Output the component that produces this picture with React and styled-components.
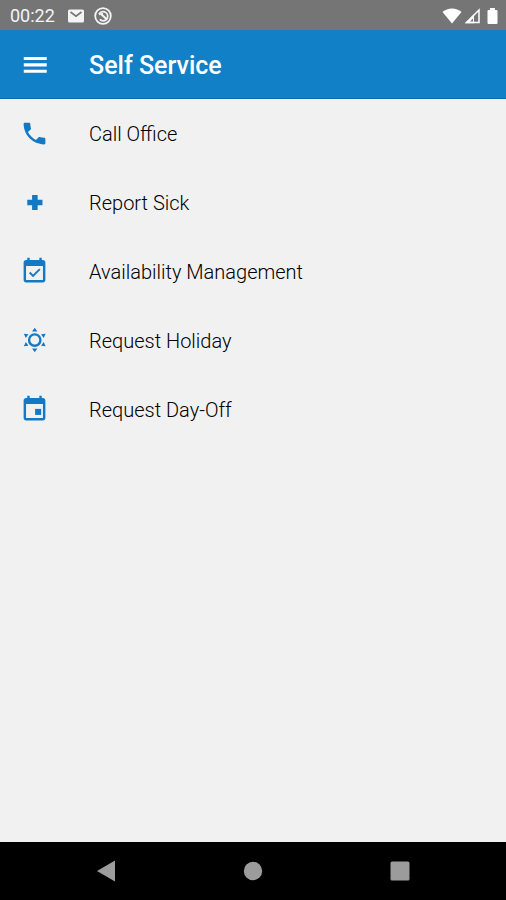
import React from "react";
import styled, { createGlobalStyle } from "styled-components";

const GlobalStyle = createGlobalStyle`
  *, *::before, *::after { box-sizing: border-box; }
  html, body { margin: 0; height: 100%; }
  body { background: #f1f1f1; font-family: Roboto, "Noto Sans", sans-serif; }
  #root { height: 100%; }
`;

const Screen = styled.div`
  display: flex;
  flex-direction: column;
  min-height: 100%;
  background: #f1f1f1;
`;

const StatusBar = styled.div`
  display: flex;
  align-items: center;
  justify-content: space-between;
  height: 30px;
  padding: 1px 5px 0 10px;
  background: #757575;
  color: #f4f4f4;
`;

const StatusGroup = styled.div`
  display: flex;
  align-items: center;
  gap: ${(p) => p.$gap}px;
`;

const Clock = styled.time`
  margin-right: 4px;
  font-size: 18px;
  line-height: 28px;
`;

const AppBar = styled.header`
  display: flex;
  align-items: center;
  height: 69px;
  padding-left: 16px;
  background: #1180c6;
  border-bottom: 1px solid #0d6cb0;
  color: #fff;
`;

const MenuButton = styled.button`
  display: flex;
  align-items: center;
  justify-content: center;
  width: 38px;
  height: 38px;
  margin-right: 35px;
  padding: 0;
  border: 0;
  background: none;
  color: #fff;
  cursor: pointer;
`;

const Title = styled.h1`
  margin: 0;
  padding-top: 4px;
  font-size: 25px;
  font-weight: 500;
  line-height: 32px;
`;

const Menu = styled.ul`
  flex: 1;
  margin: 0;
  padding: 0;
  list-style: none;
`;

const MenuItem = styled.a`
  display: flex;
  align-items: center;
  gap: 40px;
  height: 69px;
  padding-left: 20px;
  color: #000;
  font-size: 20px;
  font-weight: 300;
  line-height: 28px;
  text-decoration: none;

  svg { color: #1479c4; flex: none; }
`;

const NavBar = styled.nav`
  display: flex;
  align-items: center;
  justify-content: center;
  gap: 99px;
  height: 58px;
  background: #000;
`;

const NavButton = styled.button`
  display: flex;
  align-items: center;
  justify-content: center;
  width: 48px;
  height: 48px;
  padding: 0;
  border: 0;
  background: none;
  color: #9c9c9c;
  cursor: pointer;
`;

const Icon = ({ size = 29, children }) => (
  <svg width={size} height={size} viewBox="0 0 24 24" fill="currentColor" aria-hidden="true">
    {children}
  </svg>
);

const CALENDAR =
  "M19 2.500h-1V.6h-2v1.900H8V.6H6v1.900H5c-1.110 0-2 .9-2 2v14.500c0 1.100.89 2 2 2h14c1.100 0 2-.9 2-2V4.500c0-1.100-.9-2-2-2zm0 16.500H5V7.500h14V19z";

const items = [
  {
    label: "Call Office",
    icon: (
      <path d="M6.62 10.79c1.44 2.83 3.76 5.14 6.59 6.59l2.2-2.2c.27-.27.67-.36 1.02-.24 1.12.37 2.33.57 3.57.57.55 0 1 .45 1 1V20c0 .55-.45 1-1 1-9.39 0-17-7.61-17-17 0-.55.45-1 1-1h3.5c.55 0 1 .45 1 1 0 1.25.2 2.45.57 3.57.11.35.03.74-.25 1.02l-2.2 2.2z" />
    ),
  },
  { label: "Report Sick", icon: <path d="M10 5.700h4.600v4h4v4.600h-4v4H10v-4H6V9.700h4z" /> },
  {
    label: "Availability Management",
    icon: (
      <>
        <path d={CALENDAR} />
        <path d="M8 12.800l2.800 2.800 5.600-5.600" fill="none" stroke="currentColor" strokeWidth="1.6" />
      </>
    ),
  },
  {
    label: "Request Holiday",
    icon: (
      <>
        <circle cx="12.200" cy="11.600" r="4.700" fill="none" stroke="currentColor" strokeWidth="2" />
        <path d="M12.200 1.500l2.200 3.100H10zM12.200 21.700l2.200-3.100H10zM3.200 6.400l3.800.4-2.200 3.200zM21.200 6.400l-3.800.4 2.200 3.200zM3.200 16.800l3.800-.4-2.200-3.200zM21.200 16.800l-3.800-.4 2.200-3.200z" />
      </>
    ),
  },
  {
    label: "Request Day-Off",
    icon: (
      <>
        <path d={CALENDAR} />
        <path d="M12.500 11.500h5v5h-5z" />
      </>
    ),
  },
];

export default function App() {
  return (
    <Screen>
      <GlobalStyle />
      <StatusBar>
        <StatusGroup $gap={9}>
          <Clock>00:22</Clock>
          <svg width="17" height="14" viewBox="0 0 17 14" aria-hidden="true">
            <rect x="0" y="0.5" width="16" height="13" rx="1.5" fill="#f4f4f4" />
            <path d="M2.5 3L8 7.200 13.500 3" fill="none" stroke="#757575" strokeWidth="1.6" />
          </svg>
          <svg width="18" height="18" viewBox="0 0 18 18" fill="none" stroke="#f4f4f4" aria-hidden="true">
            <circle cx="9" cy="9" r="7.8" strokeWidth="1.8" />
            <path d="M5 7.200a4.600 4.600 0 1 1 .8 5.200" strokeWidth="1.7" />
            <path d="M7 7l6 5.500" strokeWidth="2" />
            <path d="M5 7.500l4-.8" strokeWidth="1.7" />
          </svg>
        </StatusGroup>
        <StatusGroup $gap={2}>
          <svg width="20" height="16" viewBox="0 0 20 16" fill="#fff" aria-hidden="true">
            <path d="M10 15.5L.5 4C3 1.700 6.300.5 10 .5S17 1.700 19.500 4z" />
          </svg>
          <svg width="17" height="16" viewBox="0 0 17 16" aria-hidden="true">
            <path d="M2.500 14.500L15 2v12.500z" fill="none" stroke="#fff" strokeWidth="1.500" />
            <path d="M1 15.300l9-9v9z" fill="#fff" />
            <path d="M6 13.500l3-3v3z" fill="#757575" />
          </svg>
          <svg width="18" height="18" viewBox="0 0 18 18" fill="#fff" aria-hidden="true">
            <path d="M7 1h5v2h1.500q1 0 1 1v12q0 1-1 1h-8q-1 0-1-1V4q0-1 1-1H7z" />
          </svg>
        </StatusGroup>
      </StatusBar>
      <AppBar>
        <MenuButton type="button" aria-label="Open menu">
          <Icon>
            <path d="M2.300 5.700h19v2.600h-19zM2.300 11h19v2.600h-19zM2.300 16.300h19v2.600h-19z" />
          </Icon>
        </MenuButton>
        <Title>Self Service</Title>
      </AppBar>
      <Menu>
        {items.map((item) => (
          <li key={item.label}>
            <MenuItem href="#">
              <Icon>{item.icon}</Icon>
              {item.label}
            </MenuItem>
          </li>
        ))}
      </Menu>
      <NavBar aria-label="System">
        <NavButton type="button" aria-label="Back">
          <svg width="20" height="22" viewBox="0 0 20 22" fill="currentColor" aria-hidden="true">
            <path d="M1 11L19 .5v21z" />
          </svg>
        </NavButton>
        <NavButton type="button" aria-label="Home">
          <svg width="20" height="20" viewBox="0 0 20 20" fill="currentColor" aria-hidden="true">
            <circle cx="10" cy="10" r="9.200" />
          </svg>
        </NavButton>
        <NavButton type="button" aria-label="Recent apps">
          <svg width="20" height="20" viewBox="0 0 20 20" fill="currentColor" aria-hidden="true">
            <rect x="0.500" y="0.500" width="19" height="19" rx="1.500" />
          </svg>
        </NavButton>
      </NavBar>
    </Screen>
  );
}
